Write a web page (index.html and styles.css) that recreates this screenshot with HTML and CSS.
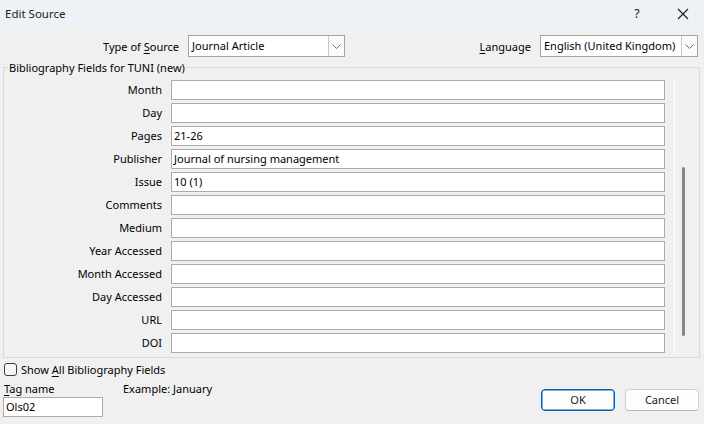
FILE: index.html
```html
<!DOCTYPE html>
<html>
<head>
<meta charset="utf-8">
<link rel="stylesheet" href="styles.css">
</head>
<body>
<div class="dialog">
  <div class="titlebar">
    <span class="title">Edit Source</span>
    <div class="title-btns">
      <span class="help">?</span>
      <span class="close"><svg width="12" height="12" viewBox="0 0 12 12"><path d="M1 1L11 11M11 1L1 11" stroke="#1a1a1a" stroke-width="1.1" fill="none"/></svg></span>
    </div>
  </div>

  <div class="toprow">
    <div class="field-type">
      <span class="lbl">Type of <u>S</u>ource</span>
      <div class="combo combo-type">
        <span class="combo-text">Journal Article</span>
        <span class="combo-btn"><svg width="9" height="5" viewBox="0 0 9 5"><path d="M0.5 0.5L4.5 4.5L8.5 0.5" stroke="#707070" fill="none"/></svg></span>
      </div>
    </div>
    <div class="field-lang">
      <span class="lbl"><u>L</u>anguage</span>
      <div class="combo combo-lang">
        <span class="combo-text">English (United Kingdom)</span>
        <span class="combo-btn"><svg width="9" height="5" viewBox="0 0 9 5"><path d="M0.5 0.5L4.5 4.5L8.5 0.5" stroke="#707070" fill="none"/></svg></span>
      </div>
    </div>
  </div>

  <fieldset class="group">
    <legend>Bibliography Fields for TUNI (new)</legend>
    <div class="group-body">
      <div class="fields">
        <span class="flabel">Month</span><div class="finput"></div>
        <span class="flabel">Day</span><div class="finput"></div>
        <span class="flabel">Pages</span><div class="finput">21-26</div>
        <span class="flabel">Publisher</span><div class="finput">Journal of nursing management</div>
        <span class="flabel">Issue</span><div class="finput">10 (1)</div>
        <span class="flabel">Comments</span><div class="finput"></div>
        <span class="flabel">Medium</span><div class="finput"></div>
        <span class="flabel">Year Accessed</span><div class="finput"></div>
        <span class="flabel">Month Accessed</span><div class="finput"></div>
        <span class="flabel">Day Accessed</span><div class="finput"></div>
        <span class="flabel">URL</span><div class="finput"></div>
        <span class="flabel">DOI</span><div class="finput"></div>
      </div>
      <div class="scrollbar"><div class="thumb"></div></div>
    </div>
  </fieldset>

  <div class="bottom">
    <div class="bottom-left">
      <div class="check-row"><span class="checkbox"></span><span>Show <u>A</u>ll Bibliography Fields</span></div>
      <div class="tag-labels"><span><u>T</u>ag name</span><span>Example: January</span></div>
      <div class="tag-input">Ols02</div>
    </div>
    <div class="buttons">
      <button class="btn btn-primary">OK</button>
      <button class="btn">Cancel</button>
    </div>
  </div>
</div>
</body>
</html>
```

FILE: styles.css
```css
* { box-sizing: border-box; }
html, body {
  margin: 0;
  padding: 0;
}
body {
  width: 704px;
  height: 424px;
  overflow: hidden;
  background: #f0f0f0;
  font-family: "Noto Sans", "Open Sans", sans-serif;
  font-size: 11px;
  color: #000;
}
u { text-decoration-thickness: 1px; text-underline-offset: 2px; }

.dialog { width: 704px; height: 424px; }

.titlebar {
  height: 27px;
  background: #eef2f6;
  display: flex;
  align-items: center;
  justify-content: space-between;
  padding-left: 5px;
}
.title { font-size: 11.5px; color: #1a1a1a; }
.title-btns { display: flex; align-items: center; height: 27px; }
.help {
  width: 50px;
  text-align: center;
  font-size: 12.5px;
  color: #1a1a1a;
}
.close {
  width: 42px;
  display: flex;
  justify-content: center;
  align-items: center;
}

.toprow {
  display: flex;
  align-items: center;
  padding-top: 8px;
  height: 30px;
}
.field-type {
  width: 345px;
  display: flex;
  justify-content: flex-end;
  align-items: center;
  gap: 9px;
}
.field-lang {
  margin-left: auto;
  margin-right: 6px;
  display: flex;
  align-items: center;
  gap: 9px;
}
.combo {
  height: 22px;
  border: 1px solid #a2a2a2;
  background: #fff;
  display: flex;
  align-items: stretch;
}
.combo-type { width: 157px; }
.combo-lang { width: 158px; }
.combo-text {
  flex: 1;
  padding-left: 3px;
  line-height: 20px;
  white-space: nowrap;
  overflow: hidden;
}
.combo-btn {
  width: 16px;
  border-left: 1px solid #c8c8c8;
  display: flex;
  align-items: center;
  justify-content: center;
  background: #fbfbfb;
}

.group {
  margin: 2px 4px 0 3px;
  padding: 5px 0 4px 0;
  border: 1px solid #dadada;
  min-width: 0;
}
.group legend {
  margin-left: 4px;
  padding: 2px 1px 0 1px;
  line-height: 14px;
}
.group-body {
  display: flex;
  align-items: stretch;
}
.fields {
  display: grid;
  grid-template-columns: 158px 494px;
  column-gap: 9px;
  row-gap: 3px;
}
.flabel {
  text-align: right;
  line-height: 20px;
  height: 20px;
  white-space: nowrap;
}
.finput {
  height: 20px;
  border: 1px solid #ababab;
  background: #fff;
  padding: 0 2px;
  line-height: 18px;
  white-space: nowrap;
  overflow: hidden;
}
.scrollbar {
  margin-left: 9px;
  width: 11px;
  border-left: 1px solid #ffffff;
}
.thumb {
  margin-left: 7px;
  margin-top: 87px;
  width: 3px;
  height: 169px;
  background: #868686;
  border-radius: 1.5px;
}

.bottom {
  display: flex;
  align-items: flex-end;
  justify-content: space-between;
  margin-top: 5px;
  padding-right: 5px;
}
.bottom-left { display: flex; flex-direction: column; }
.check-row {
  display: flex;
  align-items: center;
  gap: 4px;
  padding-left: 4px;
  height: 13px;
  line-height: 13px;
}
.checkbox {
  width: 13px;
  height: 13px;
  border: 1px solid #3c3c3c;
  border-radius: 3px;
  background: #f7f7f7;
}
.tag-labels {
  display: grid;
  grid-template-columns: 119px auto;
  padding-left: 4px;
  margin-top: 6px;
  line-height: 14px;
  height: 14px;
}
.tag-input {
  margin-top: 1px;
  margin-left: 3px;
  width: 100px;
  height: 20px;
  border: 1px solid #ababab;
  background: #fff;
  padding: 0 2px;
  line-height: 18px;
}
.buttons {
  display: flex;
  gap: 10px;
  margin-bottom: 6px;
}
.btn {
  width: 74px;
  height: 22px;
  font: inherit;
  color: #1a1a1a;
  background: #fdfdfd;
  border: 1px solid #d0d0d0;
  border-bottom-color: #b8b8b8;
  border-radius: 4px;
  padding: 0;
  line-height: 20px;
}
.btn-primary {
  border: 1px solid #005fb8;
  box-shadow: inset 0 0 0 0.5px #005fb8;
}
```
